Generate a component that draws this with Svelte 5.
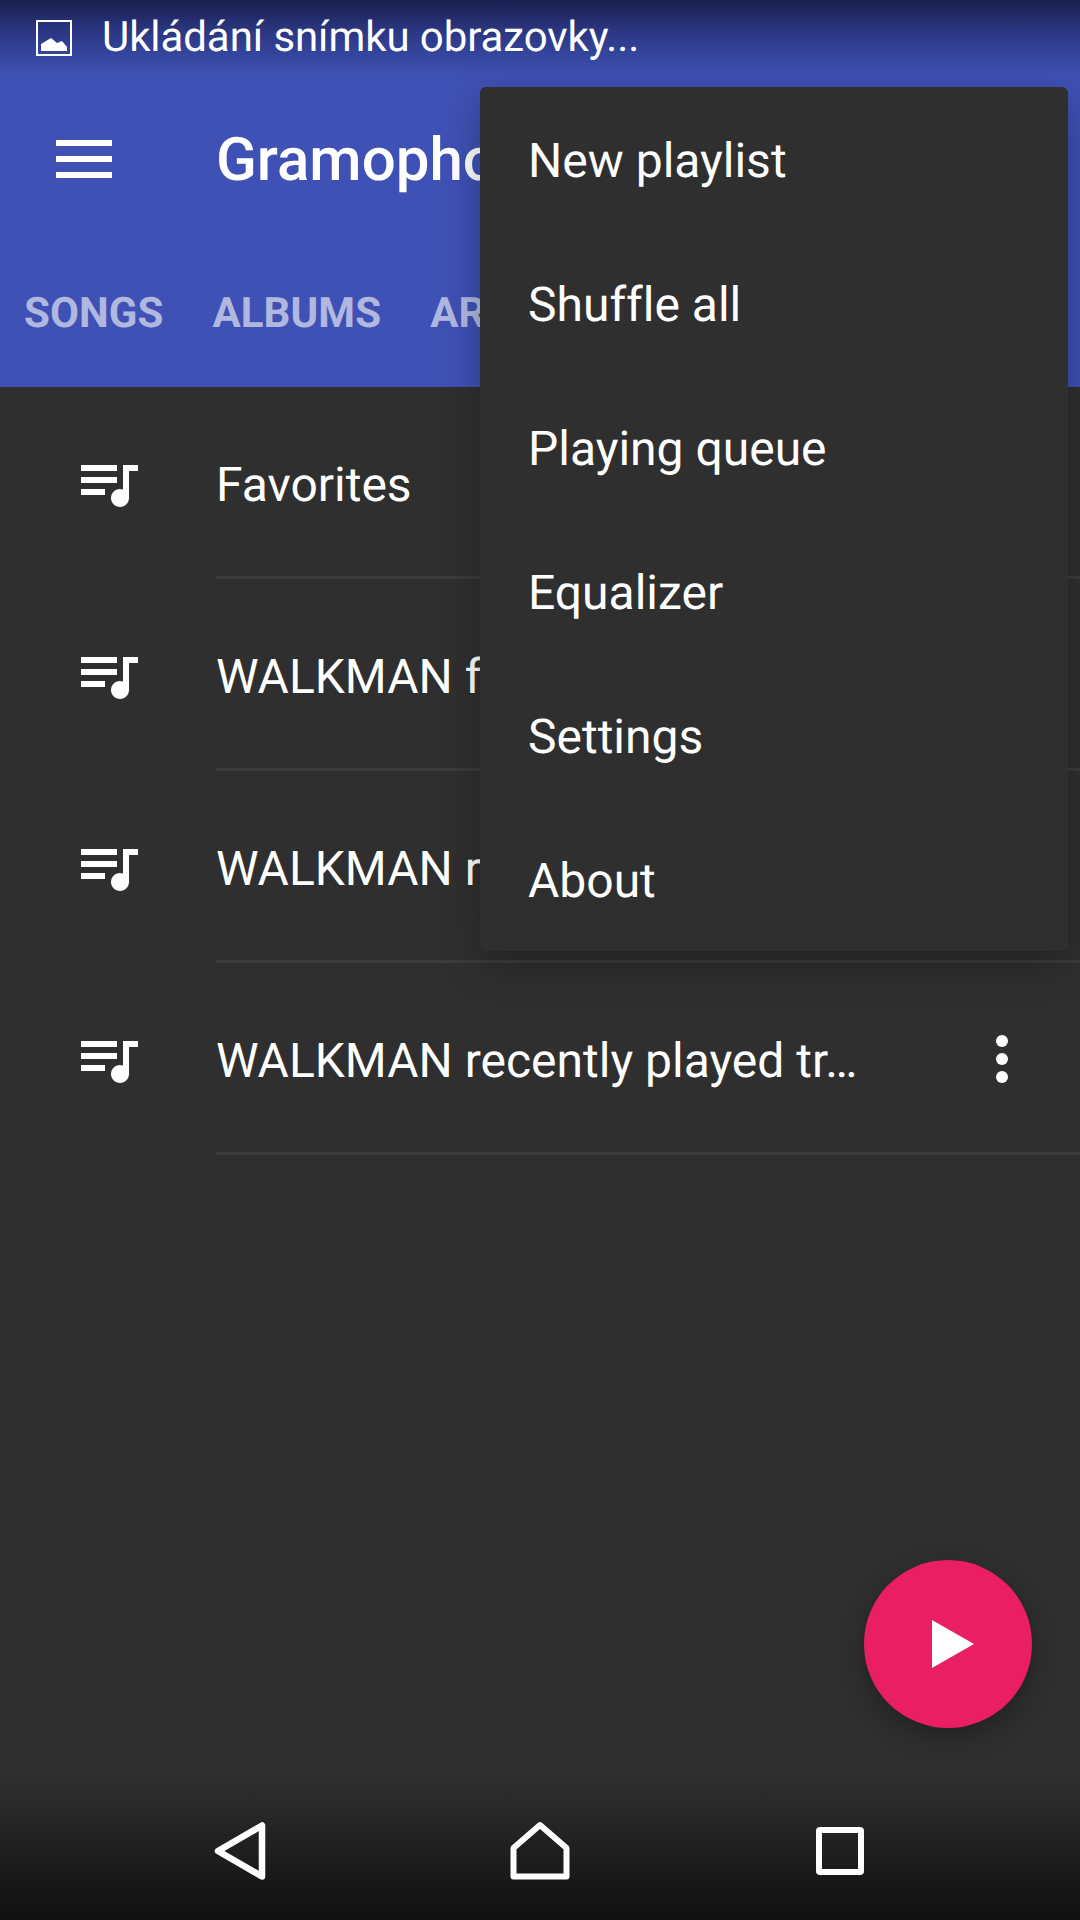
<script>
  const tabs = ['SONGS', 'ALBUMS', 'ARTISTS'];
  const playlists = ['Favorites', 'WALKMAN favorites', 'WALKMAN recently added', 'WALKMAN recently played tr…'];
  const menu = ['New playlist', 'Shuffle all', 'Playing queue', 'Equalizer', 'Settings', 'About'];
</script>

<div class="screen">
  <header class="appbar">
    <div class="status">
      <svg class="shot" width="36" height="36" viewBox="0 0 36 36" aria-hidden="true">
        <rect x="1" y="1" width="34" height="34" fill="none" stroke="#fff" stroke-width="2"/>
        <path d="M5 31V24L15 18L21 23L26 21L31 27V31Z" fill="#fff"/>
      </svg>
      <span class="status-text">Ukládání snímku obrazovky...</span>
    </div>
    <div class="toolbar">
      <div class="burger" aria-hidden="true"><i></i><i></i><i></i></div>
      <span class="title">Gramophone</span>
    </div>
    <nav class="tabs">
      {#each tabs as t}<span class="tab">{t}</span>{/each}
    </nav>
  </header>

  <main class="list">
    {#each playlists as name}
      <div class="row">
        <svg class="note" width="72" height="72" viewBox="0 0 24 24" aria-hidden="true">
          <path fill="#fff" d="M15 6H3v2h12V6zm0 4H3v2h12v-2zM3 16h8v-2H3v2zM17 6v8.18c-.31-.11-.65-.18-1-.18-1.66 0-3 1.34-3 3s1.34 3 3 3 3-1.34 3-3V8h3V6h-5z"/>
        </svg>
        <div class="row-body">
          <span class="row-text">{name}</span>
          <svg class="more" width="72" height="72" viewBox="0 0 24 24" aria-hidden="true">
            <circle cx="12" cy="6" r="2" fill="#fff"/><circle cx="12" cy="12" r="2" fill="#fff"/><circle cx="12" cy="18" r="2" fill="#fff"/>
          </svg>
        </div>
      </div>
    {/each}
  </main>

  <footer class="navbar">
    <svg width="60" height="60" viewBox="0 0 60 60" aria-hidden="true">
      <path d="M52 4.500V55.500L8 30Z" fill="none" stroke="#fff" stroke-width="6.500" stroke-linejoin="round"/>
    </svg>
    <svg width="60" height="60" viewBox="0 0 60 60" aria-hidden="true">
      <path d="M30 4L56.500 27V55.500H3.500V27Z" fill="none" stroke="#fff" stroke-width="6" stroke-linejoin="round"/>
    </svg>
    <svg width="60" height="60" viewBox="0 0 60 60" aria-hidden="true">
      <rect x="9" y="9" width="42" height="42" rx="1" fill="none" stroke="#fff" stroke-width="6" stroke-linejoin="round"/>
    </svg>
  </footer>

  <div class="menu">
    {#each menu as item}<div class="menu-item">{item}</div>{/each}
  </div>

  <div class="fab">
    <svg width="42" height="48" viewBox="0 0 42 48" aria-hidden="true"><path d="M0 0L42 24L0 48Z" fill="#fff"/></svg>
  </div>
</div>

<style>
  :global(body) { margin: 0; background: #2f2f2f; }
  .screen {
    position: relative;
    width: 1080px;
    height: 1920px;
    overflow: hidden;
    display: flex;
    flex-direction: column;
    background: #2f2f2f;
    color: #fff;
    font-family: Roboto, "Noto Sans", sans-serif;
    text-rendering: geometricPrecision;
    font-variant-ligatures: none;
  }
  .appbar { background: #3f51b5; display: flex; flex-direction: column; height: 387px; flex: none; }
  .status {
    height: 75px;
    display: flex;
    align-items: center;
    gap: 30px;
    padding-left: 36px;
    background: linear-gradient(#191f4f 0, #2a3680 30px, #3f51b5 75px);
  }
  .status-text { font-size: 42px; line-height: 75px; white-space: nowrap; letter-spacing: -0.08px; }
  .toolbar { height: 168px; display: flex; align-items: center; padding-left: 56px; }
  .burger { width: 56px; display: flex; flex-direction: column; gap: 10px; margin-right: 104px; }
  .burger i { display: block; height: 6px; background: #fff; }
  .title { font-size: 60px; font-weight: 500; white-space: nowrap; }
  .tabs { height: 141px; padding: 0 0 3px 24px; display: flex; align-items: center; gap: 49px; }
  .tab { font-size: 42px; font-weight: 700; color: rgba(255,255,255,.6); white-space: nowrap; letter-spacing: 0.1px; }

  .list { flex: 1; }
  .row { height: 192px; display: flex; }
  .note { flex: none; margin: 60px 72px 0 72px; }
  .row-body {
    flex: 1;
    display: flex;
    align-items: center;
    justify-content: space-between;
    box-sizing: border-box;
    border-bottom: 3px solid #3c3c3c;
    padding: 3px 42px 0 0;
    height: 192px;
    min-width: 0;
  }
  .row-text { font-size: 48px; white-space: nowrap; padding-top: 3px; }
  .more { flex: none; }

  .navbar {
    height: 144px;
    box-sizing: border-box;
    padding-top: 6px;
    flex: none;
    display: flex;
    align-items: center;
    justify-content: center;
    gap: 240px;
    background: linear-gradient(#2f2f2f, #101010);
  }

  .menu {
    position: absolute;
    left: 480px;
    top: 87px;
    width: 588px;
    background: #2f2f2f;
    border-radius: 6px;
    box-shadow: 0 12px 40px rgba(0,0,0,.28);
  }
  .menu-item { height: 144px; line-height: 147px; padding-left: 48px; font-size: 48px; white-space: nowrap; }

  .fab {
    position: absolute;
    left: 864px;
    top: 1560px;
    width: 168px;
    height: 168px;
    border-radius: 50%;
    background: #e91e63;
    display: flex;
    align-items: center;
    justify-content: center;
    box-shadow: 0 9px 27px rgba(0,0,0,.3);
  }
  .fab svg { margin-left: 10px; }
</style>
